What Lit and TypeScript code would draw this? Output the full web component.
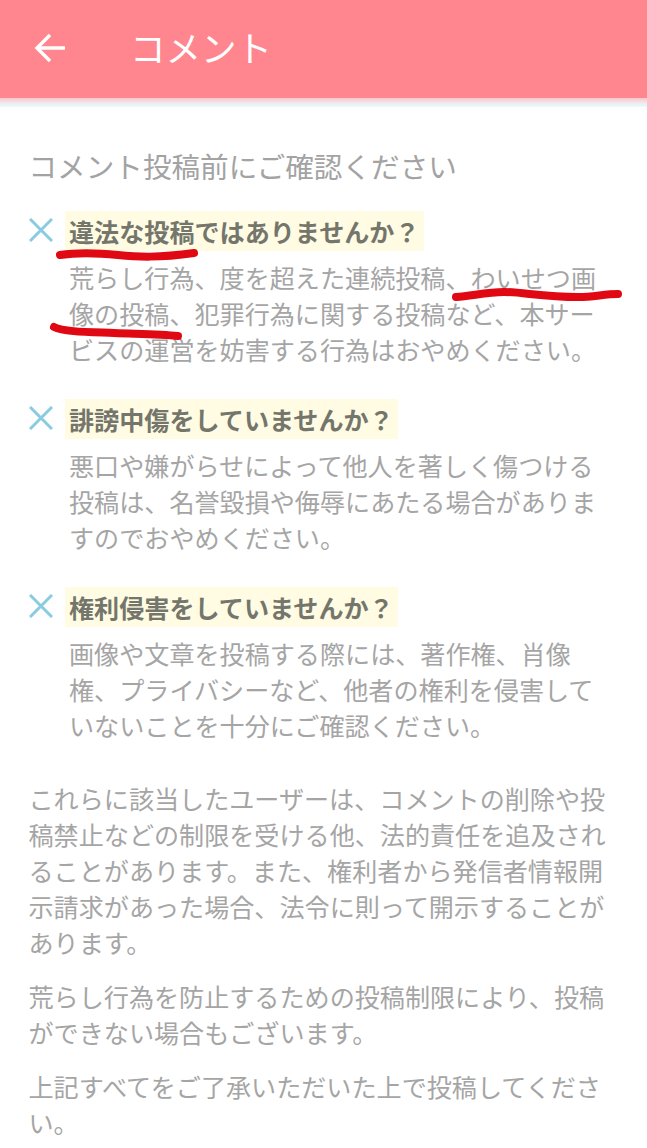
import { LitElement, html, css } from 'lit';
import { customElement } from 'lit/decorators.js';

const checks = [
  {
    title: '違法な投稿ではありませんか\uFF1F',
    body: '荒らし行為、度を超えた連続投稿、わいせつ画像の投稿、犯罪行為に関する投稿など、本サービスの運営を妨害する行為はおやめください。',
  },
  {
    title: '誹謗中傷をしていませんか\uFF1F',
    body: '悪口や嫌がらせによって他人を著しく傷つける投稿は、名誉毀損や侮辱にあたる場合がありますのでおやめください。',
  },
  {
    title: '権利侵害をしていませんか\uFF1F',
    body: '画像や文章を投稿する際には、著作権、肖像権、プライバシーなど、他者の権利を侵害していないことを十分にご確認ください。',
  },
];

const notes = [
  'これらに該当したユーザーは、コメントの削除や投稿禁止などの制限を受ける他、法的責任を追及されることがあります。また、権利者から発信者情報開示請求があった場合、法令に則って開示することがあります。',
  '荒らし行為を防止するための投稿制限により、投稿ができない場合もございます。',
  '上記すべてをご了承いただいた上で投稿してください。',
];

@customElement('app-root')
export class AppRoot extends LitElement {
  static styles = css`
    :host {
      display: block;
      position: relative;
      width: 647px;
      height: 1148px;
      overflow: hidden;
      background: #fff;
      font-family: 'Noto Sans CJK JP', 'Noto Sans', sans-serif;
      color: #a5a5a5;
    }
    .bar {
      display: flex;
      align-items: center;
      height: 98px;
      padding-left: 34px;
      padding-bottom: 4px;
      box-sizing: border-box;
      background: #ff858f;
      color: #fff;
    }
    .bar svg {
      display: block;
      width: 32px;
      height: 32px;
      margin-top: 2px;
    }
    .bar h1 {
      margin: 0 0 0 64px;
      font-size: 35.5px;
      font-weight: 400;
      line-height: 1;
    }
    .edge {
      height: 9px;
      background: linear-gradient(#f2c9cf, #f6e6ea 55%, #e6f3f4 70%, #eef7f8);
    }
    .content {
      padding: 39px 28px 0 28.5px;
    }
    h2 {
      margin: 0 0 27px;
      font-size: 28.6px;
      font-weight: 400;
      line-height: 40px;
      color: #a3a3a3;
    }
    .check {
      display: grid;
      grid-template-columns: 35px 1fr;
      margin-bottom: 34px;
    }
    .check svg {
      display: block;
      width: 24px;
      height: 24px;
      margin: 5px 0 0 0.5px;
    }
    .check h3 {
      justify-self: start;
      margin: -2px 0 -2px 1.5px;
      padding: 2px 4px 2px 4px;
      font-size: 25.1px;
      font-weight: 700;
      line-height: 36px;
      color: #74766c;
      background: #fffce3;
    }
    .check p {
      grid-column: 2;
      margin: 10px 9px 0 5.5px;
      font-size: 25.1px;
      line-height: 36px;
    }
    .note {
      margin: 0 0 18px;
      font-size: 25.1px;
      line-height: 36px;
    }
    .notes {
      padding-top: 3px;
    }
    .marks {
      position: absolute;
      left: 0;
      top: 0;
      pointer-events: none;
    }
  `;

  render() {
    return html`
      <div class="bar">
        <svg viewBox="0 0 32 32" fill="none" stroke="currentColor" stroke-width="3.4">
          <path d="M31 16H3M16 3L3 16l13 13" />
        </svg>
        <h1>コメント</h1>
      </div>
      <div class="edge"></div>
      <div class="content">
        <h2>コメント投稿前にご確認ください</h2>
        ${checks.map(
          (c) => html`
            <div class="check">
              <svg viewBox="0 0 24 24" fill="none" stroke="#8accdf" stroke-width="3">
                <path d="M1 1l22 22M23 1L1 23" />
              </svg>
              <h3>${c.title}</h3>
              <p>${c.body}</p>
            </div>
          `
        )}
        <div class="notes">
          ${notes.map((n) => html`<p class="note">${n}</p>`)}
        </div>
      </div>
      <svg class="marks" width="647" height="1148" fill="none" stroke="#e00812" stroke-width="8" stroke-linecap="round">
        <path d="M60 255c20-3 38-2 58 0s40 3 76-2" />
        <path d="M456 297c16-1 30-5 48-5s40 5 74 5c16 0 26-3 40-3" />
        <path d="M54 327c10 5 34 5 60 6s46 1 64 3" />
      </svg>
    `;
  }
}
